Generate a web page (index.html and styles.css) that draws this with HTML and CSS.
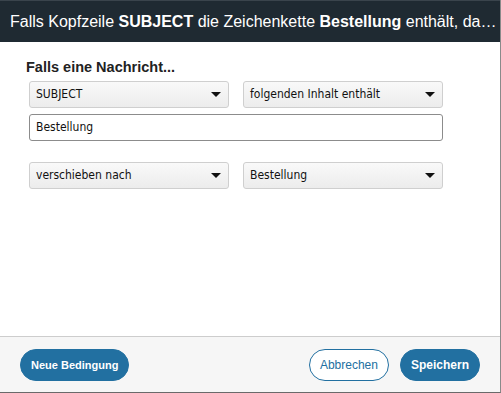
FILE: index.html
```html
<!DOCTYPE html>
<html lang="de">

<head>
  <meta charset="UTF-8">
  <meta name="viewport" content="width=device-width, initial-scale=1.0">
  <title>Filterregel</title>
  <link rel="stylesheet" href="styles.css">
</head>

<body>
  <div class="dialog">
    <div class="dialog-header">
      Falls Kopfzeile <b>SUBJECT</b> die Zeichenkette <b>Bestellung</b> enthält, da…
    </div>
    <div class="dialog-body">
      <h4>Falls eine Nachricht...</h4>
      <div class="rule">
        <div class="row">
          <div class="select">SUBJECT<span class="caret"></span></div>
          <div class="select">folgenden Inhalt enthält<span class="caret"></span></div>
        </div>
        <div class="input">Bestellung</div>
      </div>
      <div class="row">
        <div class="select">verschieben nach<span class="caret"></span></div>
        <div class="select">Bestellung<span class="caret"></span></div>
      </div>
    </div>
    <div class="dialog-footer">
      <button class="btn btn-small">Neue Bedingung</button>
      <span class="spacer"></span>
      <button class="btn btn-outline">Abbrechen</button>
      <button class="btn">Speichern</button>
    </div>
  </div>
</body>

</html>
```

FILE: styles.css
```css
html,
body {
  margin: 0;
  background: white;
  font-family: "Liberation Sans", Arial, sans-serif;
}

.dialog {
  box-sizing: border-box;
  width: 501px;
  height: 393px;
  display: flex;
  flex-direction: column;
  border-right: 1px solid #8a8a8a;
  border-bottom: 1px solid #6a6a6a;
}

.dialog-header {
  height: 42px;
  line-height: 42px;
  padding: 0 10px;
  background: #1f2a32;
  color: #fff;
  font-size: 16px;
  white-space: nowrap;
  border-top: 1px solid #3a444c;
  box-sizing: border-box;
}

.dialog-body {
  flex: 1;
  padding: 17px 26px 0;
}

.dialog-body h4 {
  margin: 0 0 6px;
  font-size: 14.5px;
  color: #222;
  line-height: 16px;
}

.rule {
  display: flex;
  flex-direction: column;
  gap: 6px;
  margin-left: 3px;
  margin-bottom: 21px;
}

.row {
  display: flex;
  gap: 14px;
}

.dialog-body > .row {
  margin-left: 3px;
}

.select,
.input {
  box-sizing: border-box;
  height: 27px;
  line-height: 25px;
  padding: 0 6px;
  border-radius: 3px;
  font-family: "DejaVu Sans Condensed", "DejaVu Sans", sans-serif;
  font-size: 12px;
  color: #111;
}

.select {
  width: 200px;
  display: flex;
  justify-content: space-between;
  align-items: center;
  border: 1px solid #cfcfcf;
  background: linear-gradient(#f9f9f9, #ececec);
}

.caret {
  width: 0;
  height: 0;
  margin-right: 1px;
  border-left: 5px solid transparent;
  border-right: 5px solid transparent;
  border-top: 5px solid #111;
}

.input {
  width: 414px;
  border: 1px solid #8c8c8c;
  background: #fff;
}

.dialog-footer {
  height: 56px;
  box-sizing: border-box;
  display: flex;
  align-items: center;
  gap: 11px;
  padding: 0 20px;
  background: #f6f6f6;
  border-top: 1px solid #cdcdcd;
}

.spacer {
  flex: 1;
}

.btn {
  height: 32px;
  padding: 0 10px;
  border: 1px solid #2270a1;
  border-radius: 16px;
  background: #2270a1;
  color: #fff;
  font-family: "Liberation Sans", Arial, sans-serif;
  font-size: 12px;
  font-weight: bold;
}

.btn-small {
  font-size: 11px;
}

.btn-outline {
  background: #fff;
  color: #2270a1;
  font-weight: normal;
}
```
